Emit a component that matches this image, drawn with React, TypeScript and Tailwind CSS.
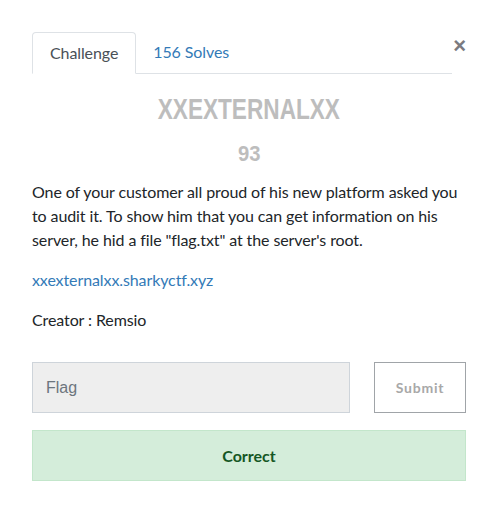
export default function App() {
  return (
    <div className="min-h-[529px] w-full bg-white font-['Lato','Open_Sans',sans-serif] text-[#212529]">
      <div className="px-[32px] pt-[32px]">
        {/* tabs + close */}
        <div className="flex items-start">
          <nav className="flex flex-1 border-b border-[#dee2e6]">
            <div className="-mb-px rounded-t-[4px] border border-b-white border-[#dee2e6] bg-white px-[17px] py-[8px] text-[16px] leading-[24px] tracking-[-0.1px] text-[#495057]">
              Challenge
            </div>
            <div className="px-[17px] py-[8px] text-[16px] leading-[24px] tracking-[-0.1px] text-[#337ab7]">
              156 Solves
            </div>
          </nav>
          <button className="mt-[2px] w-[14px] text-right font-['Liberation_Sans',sans-serif] text-[22px] font-bold leading-[24px] text-[#7a7a80]">
            ×
          </button>
        </div>

        {/* title */}
        <div className="mt-[18px] flex flex-col items-center">
          <h3 className="scale-x-[0.78] font-['Liberation_Sans',sans-serif] text-[29px] font-bold leading-[34px] text-[#bdbdbd]">
            XXEXTERNALXX
          </h3>
          <h4 className="mt-[15px] scale-x-[0.92] font-['Liberation_Sans',sans-serif] text-[22px] font-bold leading-[26px] text-[#bdbdbd]">
            93
          </h4>
        </div>

        {/* description */}
        <div className="mt-[13px] text-[16px] leading-[24px] tracking-[-0.1px]">
          <p className="mb-[16px]">
            One of your customer all proud of his new platform asked you to audit it. To show him that you can get information on his server, he hid a file "flag.txt" at the server's root.
          </p>
          <p className="mb-[16px]">
            <a className="text-[#337ab7]">xxexternalxx.sharkyctf.xyz</a>
          </p>
          <p>Creator : Remsio</p>
        </div>

        {/* submit row */}
        <div className="mt-[30px] flex gap-[24px]">
          <div className="flex h-[51px] flex-1 items-center border border-[#ced4da] bg-[#eeeeee] px-[13px] font-['Liberation_Sans',sans-serif] text-[16px] text-[#6c757d]">
            Flag
          </div>
          <button className="h-[51px] w-[92px] border border-[#a0a4a8] bg-white text-[14px] font-bold tracking-[0.8px] text-[#a8a8a8]">
            Submit
          </button>
        </div>

        {/* notification */}
        <div className="mt-[17px] flex h-[51px] items-center justify-center border border-[#c3e6cb] bg-[#d4edda] text-[16px] font-bold text-[#155724]">
          Correct
        </div>
      </div>
    </div>
  )
}
